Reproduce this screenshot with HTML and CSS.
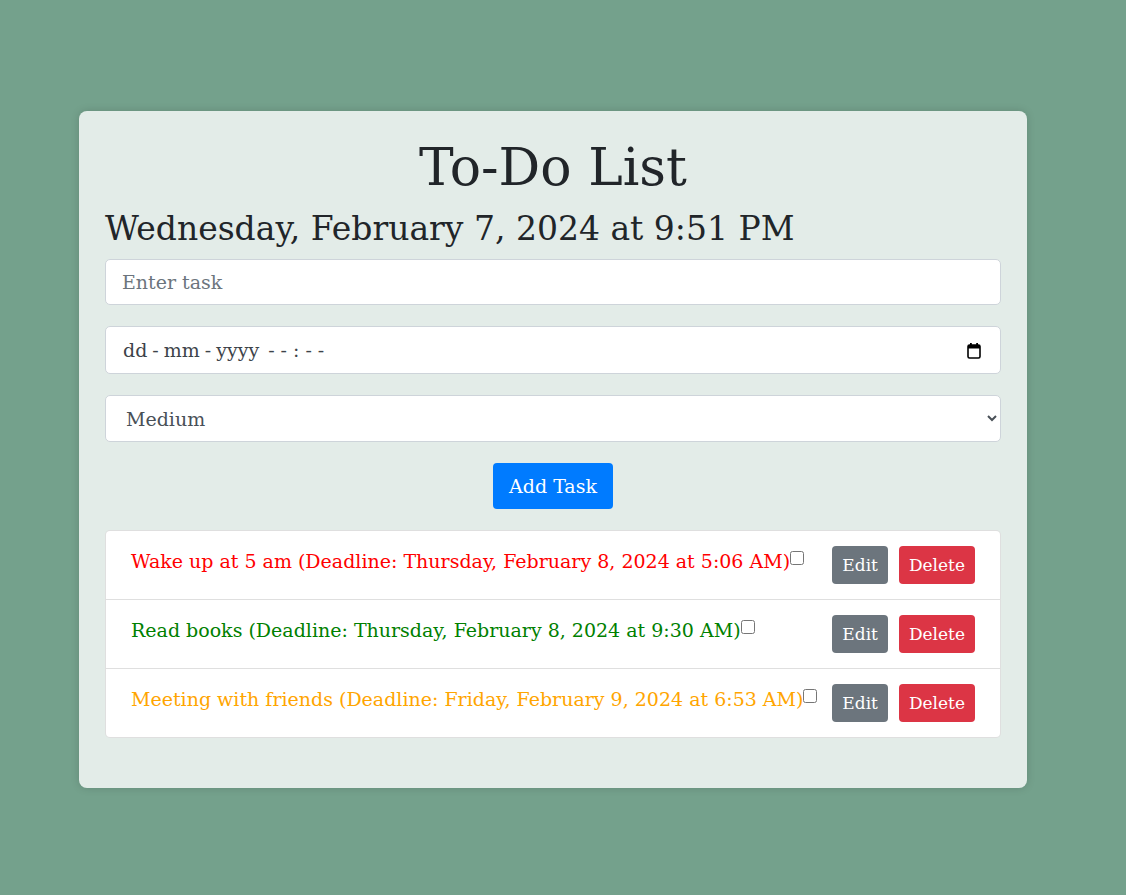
FILE: index.html
```html
<!DOCTYPE html>
<html lang="en">
<head>
<meta charset="utf-8">
<title>To-Do List</title>
<link rel="stylesheet" href="styles.css">
</head>
<body>
<div class="card">
  <h1 class="title">To-Do List</h1>
  <h2 class="now">Wednesday, February 7, 2024 at 9:51 PM</h2>
  <input class="field text-field" type="text" placeholder="Enter task">
  <div class="field date-field">
    <span class="date-text">dd<span class="sep">-</span>mm<span class="sep">-</span>yyyy<span class="gap"></span><span class="tsep">-</span><span class="tsep">-</span><span class="tsep">:</span><span class="tsep">-</span><span class="tsep">-</span></span>
    <svg class="cal" width="16" height="17" viewBox="0 0 16 17"><rect x="2" y="3" width="12" height="13" rx="1.5" fill="none" stroke="#000" stroke-width="1.6"/><rect x="2" y="3" width="12" height="3.5" fill="#000"/><rect x="4" y="1" width="1.8" height="3" fill="#000"/><rect x="10.2" y="1" width="1.8" height="3" fill="#000"/></svg>
  </div>
  <select class="field select-field">
    <option>Low</option>
    <option selected>Medium</option>
    <option>High</option>
  </select>
  <div class="actions"><button class="btn btn-add">Add Task</button></div>
  <ul class="list">
    <li class="item">
      <span class="task red">Wake up at 5 am (Deadline: Thursday, February 8, 2024 at 5:06 AM)<input type="checkbox" class="chk"></span>
      <span class="btns"><button class="btn btn-edit">Edit</button><button class="btn btn-del">Delete</button></span>
    </li>
    <li class="item">
      <span class="task green">Read books (Deadline: Thursday, February 8, 2024 at 9:30 AM)<input type="checkbox" class="chk"></span>
      <span class="btns"><button class="btn btn-edit">Edit</button><button class="btn btn-del">Delete</button></span>
    </li>
    <li class="item">
      <span class="task orange">Meeting with friends (Deadline: Friday, February 9, 2024 at 6:53 AM)<input type="checkbox" class="chk"></span>
      <span class="btns"><button class="btn btn-edit">Edit</button><button class="btn btn-del">Delete</button></span>
    </li>
  </ul>
</div>
</body>
</html>
```

FILE: styles.css
```css
* { box-sizing: border-box; }
html, body { margin: 0; padding: 0; }
body {
  background: #74a18c;
  font-family: "DejaVu Serif", "Liberation Serif", serif;
  color: #212529;
  padding-top: 111px;
  min-height: 895px;
}
.card {
  width: 948px;
  margin-left: 79px;
  background: rgba(255,255,255,0.8);
  border-radius: 8px;
  box-shadow: 0 0 8px rgba(0,0,0,0.15);
  padding: 20px 26px 50px 26px;
}
.title {
  margin: 0;
  text-align: center;
  font-weight: 300;
  font-size: 52px;
  line-height: 72px;
}
.now {
  margin: 0 0 5px 0;
  font-weight: 300;
  font-size: 33px;
  line-height: 51px;
}
.field {
  display: block;
  width: 100%;
  height: 47px;
  margin: 0 0 21px 0;
  border: 1px solid #ced4da;
  border-radius: 5px;
  background: #fff;
  font-family: inherit;
  font-size: 19px;
  color: #495057;
  padding: 0 16px;
}
.text-field { height: 46px; }
.field::placeholder { color: #6c757d; }
.date-field {
  display: flex;
  align-items: center;
  justify-content: space-between;
  height: 48px;
  padding: 0 18px 0 17px;
  color: #3d4349;
}
.date-text { white-space: pre; }
.sep { display: inline-block; margin: 0 5px; }
.tsep { display: inline-block; margin: 0 3px; }
.gap { display: inline-block; width: 6px; }
.cal { display: block; }
.select-field { padding-left: 16px; }
.actions {
  display: flex;
  justify-content: center;
  margin-bottom: 21px;
}
.btn {
  border: none;
  border-radius: 4px;
  color: #fff;
  font-family: inherit;
  cursor: pointer;
}
.btn-add {
  background: #007bff;
  font-size: 19px;
  height: 46px;
  padding: 0 16px;
}
.list {
  list-style: none;
  margin: 0;
  padding: 0;
  background: #fff;
  border: 1px solid rgba(0,0,0,0.125);
  border-radius: 5px;
}
.item {
  display: flex;
  justify-content: space-between;
  align-items: flex-start;
  padding: 15px 25px 15px 25px;
  border-top: 1px solid rgba(0,0,0,0.125);
}
.item:first-child { border-top: none; }
.task {
  font-size: 19px;
  line-height: 30px;
}
.red { color: #ff0000; }
.green { color: #008000; }
.orange { color: #ffa500; }
.chk {
  margin: 0;
  width: 14px;
  height: 14px;
  vertical-align: 3px;
}
.btns { display: flex; gap: 11px; }
.btn-edit, .btn-del {
  height: 38px;
  font-size: 17px;
  padding: 0 10px;
}
.btn-edit { background: #6c757d; }
.btn-del { background: #dc3545; }
```
